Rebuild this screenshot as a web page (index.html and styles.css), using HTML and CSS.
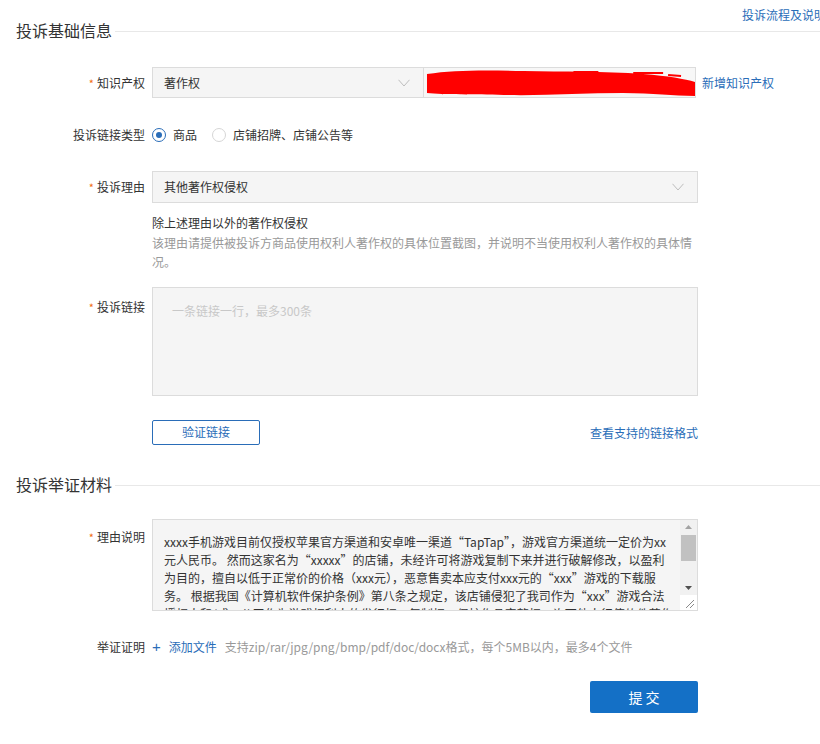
FILE: index.html
```html
<!DOCTYPE html>
<html lang="zh-CN">
<head>
<meta charset="utf-8">
<title>投诉</title>
<link rel="stylesheet" href="styles.css">
</head>
<body>
<div class="page">
  <div class="toplink"><a class="link">投诉流程及说明</a></div>
  <h2 class="sec-title">投诉基础信息</h2>

  <div class="row row-ip">
    <div class="lbl"><span class="req">*</span>知识产权</div>
    <div class="ctrl ctrl-inline">
      <div class="select half">
        <span>著作权</span>
        <svg class="arrow" width="12" height="8" viewBox="0 0 12 8"><polyline points="0.5,0.8 6,7 11.5,0.8" fill="none" stroke="#bdbdbd" stroke-width="1"/></svg>
      </div>
      <div class="input half">
        <svg class="scribble" width="272" height="31" viewBox="0 0 272 31">
          <path d="M3,7 C30,3 60,3 100,4 C140,5 180,4 220,7 C245,9 262,12 272,15 L272,29 C250,29 230,26 200,26 C160,26 120,29 80,28 C50,27 20,28 3,26 Z" fill="#ff0000"/>
          <path d="M150,5 L175,5 M210,6 L240,6 M245,8 L258,9" stroke="#ff0000" stroke-width="2" fill="none"/>
        </svg>
      </div>
      <a class="link side-link">新增知识产权</a>
    </div>
  </div>

  <div class="row row-radio">
    <div class="lbl">投诉链接类型</div>
    <div class="ctrl ctrl-inline">
      <span class="radio on"></span><span class="radio-text">商品</span>
      <span class="radio"></span><span class="radio-text">店铺招牌、店铺公告等</span>
    </div>
  </div>

  <div class="row row-reason">
    <div class="lbl"><span class="req">*</span>投诉理由</div>
    <div class="ctrl">
      <div class="select full">
        <span>其他著作权侵权</span>
        <svg class="arrow" width="12" height="8" viewBox="0 0 12 8"><polyline points="0.5,0.8 6,7 11.5,0.8" fill="none" stroke="#bdbdbd" stroke-width="1"/></svg>
      </div>
    </div>
  </div>

  <div class="row row-desc">
    <div class="lbl"></div>
    <div class="ctrl desc">
      <div class="desc-main">除上述理由以外的著作权侵权</div>
      <div class="desc-sub">该理由请提供被投诉方商品使用权利人著作权的具体位置截图，并说明不当使用权利人著作权的具体情况。</div>
    </div>
  </div>

  <div class="row row-links">
    <div class="lbl lbl-top1"><span class="req">*</span>投诉链接</div>
    <div class="ctrl">
      <div class="textarea links-area"><span class="placeholder">一条链接一行，最多300条</span></div>
    </div>
  </div>

  <div class="row row-verify">
    <div class="lbl"></div>
    <div class="ctrl verify-bar">
      <button class="btn-outline">验证链接</button>
      <a class="link">查看支持的链接格式</a>
    </div>
  </div>

  <h2 class="sec-title sec-title-2">投诉举证材料</h2>

  <div class="row row-explain">
    <div class="lbl lbl-top2"><span class="req">*</span>理由说明</div>
    <div class="ctrl">
      <div class="textarea explain-area">
        <div class="explain-text">
          <div class="line">xxxx手机游戏目前仅授权苹果官方渠道和安卓唯一渠道“TapTap”，游戏官方渠道统一定价为xx</div>
          <div class="line">元人民币。 然而这家名为“xxxxx”的店铺，未经许可将游戏复制下来并进行破解修改，以盈利</div>
          <div class="line">为目的，擅自以低于正常价的价格（xxx元），恶意售卖本应支付xxx元的“xxx”游戏的下载服</div>
          <div class="line">务。 根据我国《计算机软件保护条例》第八条之规定，该店铺侵犯了我司作为“xxx”游戏合法</div>
          <div class="line">授权人和/或xx公司作为游戏权利人的发行权、复制权、保护作品完整权、许可他人行使软件著作</div>
        </div>
        <div class="scrollbar">
          <div class="sb-track">
            <svg class="sb-up" width="17" height="14" viewBox="0 0 17 14"><polygon points="5,9 12,9 8.5,5" fill="#a3a3a3"/></svg>
            <div class="sb-thumb"></div>
            <div class="sb-space"></div>
            <svg class="sb-down" width="17" height="14" viewBox="0 0 17 14"><polygon points="5,5 12,5 8.5,9" fill="#505050"/></svg>
          </div>
          <div class="sb-corner">
            <svg width="17" height="15" viewBox="0 0 17 15"><path d="M6,13 L14,5 M10,13 L14,9" stroke="#8a8a8a" stroke-width="1" fill="none"/></svg>
          </div>
        </div>
      </div>
    </div>
  </div>

  <div class="row row-upload">
    <div class="lbl lbl-plain">举证证明</div>
    <div class="ctrl ctrl-inline">
      <span class="plus">+</span><a class="link">添加文件</a>
      <span class="hint">支持zip/rar/jpg/png/bmp/pdf/doc/docx格式，每个5MB以内，最多4个文件</span>
    </div>
  </div>

  <div class="row row-submit">
    <div class="lbl"></div>
    <div class="ctrl submit-bar">
      <button class="btn-primary">提交</button>
    </div>
  </div>
</div>
</body>
</html>
```

FILE: styles.css
```css
html, body {
  margin: 0;
  padding: 0;
  background: #ffffff;
  overflow: hidden;
}
body {
  font-family: "Noto Sans CJK SC", "Microsoft YaHei", "Liberation Sans", sans-serif;
  font-size: 12px;
  color: #333333;
}
.page {
  width: 826px;
  padding-top: 7px;
}
.link {
  color: #2a6db8;
  text-decoration: none;
  cursor: pointer;
}
.toplink {
  text-align: right;
  line-height: 15px;
  font-size: 12px;
}
.sec-title {
  margin: 0;
  padding-left: 16px;
  font-size: 16px;
  font-weight: normal;
  line-height: 16px;
  color: #333333;
  display: flex;
  align-items: center;
}
.sec-title::after {
  content: "";
  flex: 1;
  margin-left: 3px;
  margin-top: 3px;
  border-top: 1px solid #e8e8e8;
}
.sec-title-2 {
  margin-top: 31px;
}
.row {
  display: flex;
  align-items: center;
}
.lbl {
  width: 145px;
  margin-right: 7px;
  text-align: right;
  line-height: 20px;
  color: #333333;
  flex-shrink: 0;
}
.req {
  color: #f26c10;
  margin-right: 3px;
  font-size: 11px;
}
.ctrl {
  width: 546px;
}
.ctrl-inline {
  display: flex;
  align-items: center;
  width: auto;
}
.select, .input {
  box-sizing: border-box;
  height: 31px;
  background: #f5f5f5;
  border: 1px solid #dcdcdc;
  display: flex;
  align-items: center;
  justify-content: space-between;
  padding: 0 13px 0 11px;
  color: #333333;
  line-height: 20px;
}
.half {
  width: 272px;
}
.input {
  border-left: none;
  padding: 0;
  background: #f7f7f7;
  overflow: hidden;
}
.scribble {
  display: block;
}
.side-link {
  margin-left: 6px;
}
.full {
  width: 546px;
  height: 32px;
}
.arrow {
  display: block;
}
.row-ip { margin-top: 29px; }
.row-radio { margin-top: 27px; height: 20px; }
.row-reason { margin-top: 26px; }
.row-desc { margin-top: 10px; align-items: flex-start; }
.row-links { margin-top: 15px; align-items: flex-start; }
.row-verify { margin-top: 24px; }
.row-explain { margin-top: 27px; align-items: flex-start; }
.row-upload { margin-top: 26px; }
.row-submit { margin-top: 24px; }

.radio {
  box-sizing: border-box;
  width: 14px;
  height: 14px;
  border: 1px solid #d6d6d6;
  border-radius: 50%;
  background: #ffffff;
  display: flex;
  align-items: center;
  justify-content: center;
}
.radio.on {
  border-color: #2a6db8;
}
.radio.on::after {
  content: "";
  width: 6px;
  height: 6px;
  border-radius: 50%;
  background: #2a6db8;
}
.radio-text {
  margin-left: 7px;
  margin-right: 15px;
  line-height: 20px;
}
.desc {
  line-height: 19.5px;
}
.desc-main {
  color: #333333;
}
.desc-sub {
  color: #999999;
}
.textarea {
  box-sizing: border-box;
  width: 546px;
  background: #f5f5f5;
  border: 1px solid #dcdcdc;
}
.links-area {
  height: 109px;
  padding: 13px 19px;
  line-height: 20px;
}
.lbl-top1 { padding-top: 10px; }
.lbl-top2 { padding-top: 8px; }
.placeholder {
  color: #c8c8c8;
}
.verify-bar {
  display: flex;
  align-items: center;
  justify-content: space-between;
}
.btn-outline {
  box-sizing: border-box;
  width: 108px;
  height: 25px;
  border: 1px solid #2a6db8;
  border-radius: 2px;
  background: #ffffff;
  color: #2a6db8;
  font-family: inherit;
  font-size: 12px;
  padding: 0;
  line-height: 20px;
}
.explain-area {
  height: 92px;
  display: flex;
  overflow: hidden;
}
.explain-text {
  flex: 1;
  padding: 13px 0 0 11px;
  line-height: 18px;
  color: #333333;
  overflow: hidden;
}
.line {
  white-space: nowrap;
}
.scrollbar {
  width: 17px;
  display: flex;
  flex-direction: column;
  flex-shrink: 0;
}
.sb-track {
  flex: 1;
  background: #f1f1f1;
  display: flex;
  flex-direction: column;
}
.sb-up, .sb-down {
  display: block;
  flex-shrink: 0;
}
.sb-thumb {
  height: 26px;
  margin: 1px 1px 0 1px;
  background: #c1c1c1;
}
.sb-space {
  flex: 1;
}
.sb-corner {
  height: 15px;
  background: #ffffff;
}
.sb-corner svg {
  display: block;
}
.lbl-plain {
  color: #333333;
}
.plus {
  color: #2a6db8;
  font-size: 15px;
  line-height: 20px;
  margin-right: 8px;
  font-family: "Liberation Sans", sans-serif;
}
.hint {
  color: #999999;
  margin-left: 8px;
  line-height: 20px;
}
.submit-bar {
  display: flex;
  justify-content: flex-end;
}
.btn-primary {
  width: 108px;
  height: 32px;
  border: none;
  border-radius: 2px;
  background: #1470c6;
  color: #ffffff;
  font-family: inherit;
  font-size: 14px;
  letter-spacing: 3px;
  padding: 0 0 0 3px;
}
```
